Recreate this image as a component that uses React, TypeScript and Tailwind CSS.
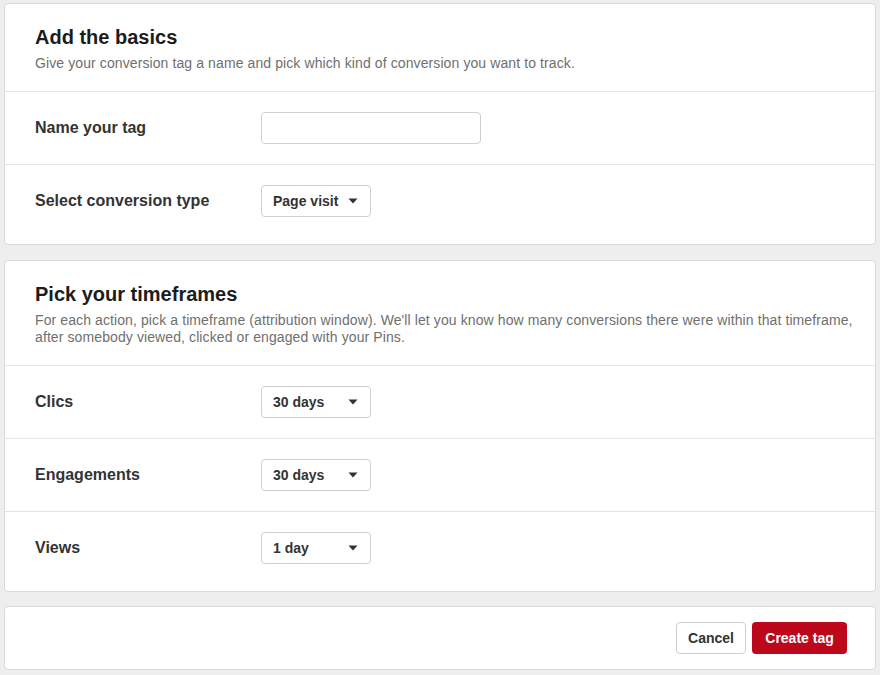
import React from 'react';

function Caret() {
  return (
    <svg width="10" height="6" viewBox="0 0 10 6" className="shrink-0">
      <path d="M0.5 0.5 L9.5 0.5 L5 5.5 Z" fill="#333333" />
    </svg>
  );
}

function Select({ value }: { value: string }) {
  return (
    <button className="flex h-[32px] w-[110px] items-center justify-between rounded-[4px] border border-[#cfcfcf] bg-white pl-[11px] pr-[12px] text-[14px] font-bold text-[#333333]">
      <span>{value}</span>
      <Caret />
    </button>
  );
}

function Row({ label, children, last }: { label: string; children: React.ReactNode; last?: boolean }) {
  return (
    <div className={`flex items-center border-t border-[#e4e4e4] px-[30px] pt-[20px] ${last ? 'pb-[27px]' : 'pb-[20px]'}`}>
      <div className="w-[226px] text-[16px] font-bold text-[#333333]">{label}</div>
      {children}
    </div>
  );
}

function Header({ title, children }: { title: string; children: React.ReactNode }) {
  return (
    <div className="px-[30px] pt-[19px] pb-[19px]">
      <h2 className="text-[20px] font-bold leading-[28px] text-[#1c1c1c]">{title}</h2>
      <p className="mt-[4px] whitespace-nowrap text-[14px] leading-[17px] tracking-[0.1px] text-[#6f6f6f]">{children}</p>
    </div>
  );
}

export default function App() {
  const timeframes = [
    { label: 'Clics', value: '30 days' },
    { label: 'Engagements', value: '30 days' },
    { label: 'Views', value: '1 day' },
  ];

  return (
    <div
      className="min-h-screen bg-[#eeeeee] px-[4px] pt-[3px] pb-[6px]"
      style={{ fontFamily: '"Liberation Sans", Arial, sans-serif' }}
    >
      <div className="flex flex-col">
        {/* Basics */}
        <div className="rounded-[4px] border border-[#d9d9d9] bg-white">
          <Header title="Add the basics">
            Give your conversion tag a name and pick which kind of conversion you want to track.
          </Header>
          <Row label="Name your tag">
            <input className="h-[32px] w-[220px] rounded-[4px] border border-[#cfcfcf] bg-white px-[10px] text-[14px] outline-none" />
          </Row>
          <Row label="Select conversion type" last>
            <Select value="Page visit" />
          </Row>
        </div>

        {/* Timeframes */}
        <div className="mt-[15px] rounded-[4px] border border-[#d9d9d9] bg-white">
          <Header title="Pick your timeframes">
            For each action, pick a timeframe (attribution window). We'll let you know how many conversions there were within that timeframe,
            <br />
            after somebody viewed, clicked or engaged with your Pins.
          </Header>
          {timeframes.map((t, i) => (
            <Row key={t.label} label={t.label} last={i === timeframes.length - 1}>
              <Select value={t.value} />
            </Row>
          ))}
        </div>

        {/* Actions */}
        <div className="mt-[14px] flex justify-end gap-[6px] rounded-[4px] border border-[#d9d9d9] bg-white px-[28px] py-[15px]">
          <button className="h-[32px] w-[70px] rounded-[4px] border border-[#cfcfcf] bg-white text-[14px] font-bold text-[#333333]">
            Cancel
          </button>
          <button className="h-[32px] w-[95px] rounded-[4px] bg-[#bd081c] text-[14px] font-bold text-white">
            Create tag
          </button>
        </div>
      </div>
    </div>
  );
}
